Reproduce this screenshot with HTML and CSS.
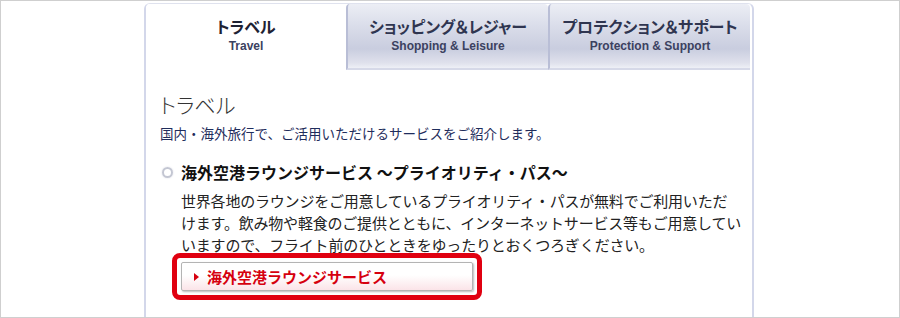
FILE: index.html
```
<!DOCTYPE html>
<html lang="ja">
<head>
	<meta charset="UTF-8">
	<title>トラベル</title>
	<link rel="stylesheet" href="styles.css">
</head>
<body>
	<div class="frame">
		<div class="panel">
			<ul class="tabs">
				<li class="active">
					<span class="ja">トラベル</span>
					<span class="en">Travel</span>
				</li>
				<li>
					<span class="ja">ショッピング＆レジャー</span>
					<span class="en">Shopping &amp; Leisure</span>
				</li>
				<li>
					<span class="ja">プロテクション＆サポート</span>
					<span class="en">Protection &amp; Support</span>
				</li>
			</ul>
			<div class="content">
				<h1>トラベル</h1>
				<p class="lead">国内・海外旅行で、ご活用いただけるサービスをご紹介します。</p>
				<div class="item">
					<h2><span class="radio"></span>海外空港ラウンジサービス ～プライオリティ・パス～</h2>
					<p class="desc">世界各地のラウンジをご用意しているプライオリティ・パスが無料でご利用いただ<br>けます。飲み物や軽食のご提供とともに、インターネットサービス等もご用意してい<br>いますので、フライト前のひとときをゆったりとおくつろぎください。</p>
					<div class="focus">
						<a class="btn" href="#"><span class="arrow"></span>海外空港ラウンジサービス</a>
					</div>
				</div>
			</div>
		</div>
	</div>
</body>
</html>
```
FILE: styles.css
```
*{
	margin: 0px;
	padding: 0px;
	box-sizing: border-box;
}
body{
	width: 900px;
	height: 318px;
	background-color: #fff;
	font-family: "Noto Sans CJK JP", "Noto Sans", sans-serif;
	color: #222;
}
ul{
	list-style: none;
}
.frame{
	width: 900px;
	height: 318px;
	border: 1px solid #cfcfcf;
	overflow: hidden;
	padding: 2px 0 0 143px;
}
.panel{
	width: 610px;
	height: 320px;
	border-left: 2px solid #d3d7ea;
	border-right: 2px solid #d3d7ea;
	border-top: 1px solid #dfe2ee;
	border-radius: 6px 6px 0 0;
}
/* タブ */
.tabs{
	display: flex;
	height: 66px;
}
.tabs>li{
	flex: 0 0 202px;
	display: flex;
	flex-direction: column;
	align-items: center;
	padding-top: 11px;
	background: linear-gradient(#eceef5 0%, #dcdfeb 30%, #c9cddf 70%, #dfe1ec 92%, #eef0f6 100%);
	border-left: 2px solid #b9bed6;
	border-bottom: 2px solid #d6d9e8;
	border-radius: 4px 4px 0 0;
	color: #2f3550;
}
.tabs>li.active{
	flex-basis: 200px;
	background: #fff;
	border: none;
	color: #1e2233;
}
.tabs .ja{
	font-size: 16px;
	font-weight: bold;
	line-height: 22px;
	font-feature-settings: "palt";
}
.tabs .en{
	font-family: "Liberation Sans", sans-serif;
	font-size: 12px;
	font-weight: bold;
	line-height: 18px;
	color: #3b4160;
}
/* 本文 */
.content{
	padding: 19px 0 0 14px;
}
h1{
	font-size: 21px;
	font-weight: 300;
	line-height: 30px;
	color: #333;
	font-feature-settings: "palt";
}
.lead{
	margin-top: 4px;
	font-size: 13.5px;
	line-height: 20px;
	color: #1f2d5c;
}
.item{
	margin-top: 18px;
}
h2{
	display: flex;
	align-items: center;
	font-size: 16px;
	font-weight: bold;
	line-height: 22px;
	color: #111;
}
.radio{
	width: 11px;
	height: 11px;
	margin: 0 8px 0 2px;
	border-radius: 50%;
	border: 2px solid #c3c6d2;
	box-shadow: 0 0 2px #d8dae4;
}
.desc{
	margin: 7px 0 0 21px;
	font-size: 15px;
	line-height: 22px;
	color: #222;
	white-space: nowrap;
	letter-spacing: -0.2px;
}
.focus{
	display: inline-block;
	margin: -3px 0 0 12px;
	padding: 4px;
	border: 5px solid #e00010;
	border-radius: 8px;
}
.btn{
	display: flex;
	align-items: center;
	width: 292px;
	height: 29px;
	padding-left: 12px;
	border: 1px solid #b4b4b4;
	border-radius: 2px;
	background: linear-gradient(#fff 0%, #fff 45%, #fbe4e8 100%);
	box-shadow: 1px 1px 2px #bbb;
	font-size: 15px;
	font-weight: bold;
	color: #d6000f;
	text-decoration: none;
}
.arrow{
	width: 0;
	height: 0;
	margin-right: 8px;
	border-left: 5px solid #d6000f;
	border-top: 4px solid transparent;
	border-bottom: 4px solid transparent;
}
```
